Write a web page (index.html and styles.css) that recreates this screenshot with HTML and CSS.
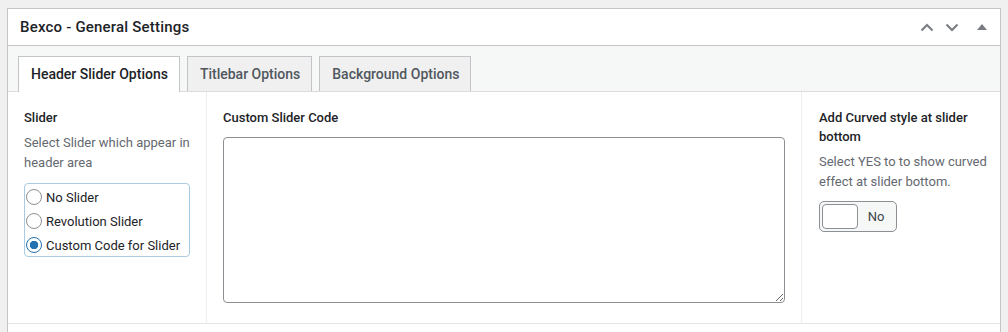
FILE: index.html
```html
<!DOCTYPE html>
<html lang="en">

<head>
    <meta charset="UTF-8" />
    <meta name="viewport" content="width=device-width, initial-scale=1" />
    <title>Bexco - General Settings</title>
    <link rel="stylesheet" href="styles.css">
</head>

<body>
    <div class="postbox">
        <div class="postbox-header">
            <h2>Bexco - General Settings</h2>
            <div class="handle-actions">
                <button class="handle-btn" aria-label="Move up">
                    <svg viewBox="0 0 14 9" width="14" height="9"><path d="M1.5 7.5 7 2l5.5 5.5" /></svg>
                </button>
                <button class="handle-btn" aria-label="Move down">
                    <svg viewBox="0 0 14 9" width="14" height="9"><path d="M1.5 1.5 7 7l5.5-5.5" /></svg>
                </button>
                <button class="handle-btn toggle-arrow" aria-label="Toggle panel">
                    <svg viewBox="0 0 10 6" width="10" height="6"><polygon points="5,0 10,6 0,6" /></svg>
                </button>
            </div>
        </div>

        <div class="tabs">
            <a href="#" class="tab active">Header Slider Options</a>
            <a href="#" class="tab">Titlebar Options</a>
            <a href="#" class="tab">Background Options</a>
        </div>

        <div class="fields">
            <div class="field field-slider">
                <div class="field-label">Slider</div>
                <p class="field-desc">Select Slider which appear in header area</p>
                <div class="radio-list">
                    <label class="radio"><input type="radio" name="slider" /> No Slider</label>
                    <label class="radio"><input type="radio" name="slider" /> Revolution Slider</label>
                    <label class="radio"><input type="radio" name="slider" checked /> Custom Code for Slider</label>
                </div>
            </div>
            <div class="field field-code">
                <div class="field-label">Custom Slider Code</div>
                <textarea class="code-box"></textarea>
            </div>
            <div class="field field-curve">
                <div class="field-label">Add Curved style at slider bottom</div>
                <p class="field-desc">Select YES to to show curved effect at slider bottom.</p>
                <div class="switch">
                    <span class="switch-knob"></span>
                    <span class="switch-text">No</span>
                </div>
            </div>
        </div>
        <div class="postbox-foot"></div>
    </div>
</body>
</html>
```

FILE: styles.css
```css
* {
    box-sizing: border-box;
}

body {
    margin: 0;
    padding: 8px 7px 0 7px;
    background: #f0f0f1;
    font-family: Roboto, "Open Sans", sans-serif;
    font-size: 13px;
    color: #1d2327;
}

.postbox {
    background: #fff;
    border: 1px solid #c3c4c7;
    border-bottom: none;
}

/* header */
.postbox-header {
    display: flex;
    align-items: center;
    justify-content: space-between;
    height: 37px;
    border-bottom: 1px solid #c3c4c7;
}

.postbox-header h2 {
    margin: 0;
    padding-left: 12px;
    font-size: 15px;
    font-weight: 500;
    letter-spacing: 0.2px;
}

.handle-actions {
    display: flex;
    align-items: center;
}

.handle-btn {
    display: flex;
    align-items: center;
    justify-content: center;
    width: 25px;
    height: 36px;
    padding: 0;
    border: none;
    background: none;
}

.handle-btn svg {
    fill: none;
    stroke: #787c82;
    stroke-width: 2;
}

.toggle-arrow {
    width: 36px;
}

.toggle-arrow svg {
    fill: #787c82;
    stroke: none;
}

/* tabs */
.tabs {
    display: flex;
    gap: 7px;
    padding: 10px 10px 0;
    background: #f6f7f7;
    border-bottom: 1px solid #dcdcde;
}

.tab {
    display: block;
    height: 35px;
    line-height: 34px;
    padding: 0 11px 0 12px;
    margin-bottom: -1px;
    border: 1px solid #c3c4c7;
    border-bottom: none;
    background: #f0f0f1;
    color: #50575e;
    font-size: 14px;
    font-weight: 500;
    text-decoration: none;
}

.tab.active {
    background: #fff;
    color: #1d2327;
    height: 36px;
}

/* fields */
.fields {
    display: flex;
    border-bottom: 1px solid #e5e5e5;
}

.field {
    padding: 16px 16px 20px;
}

.field-slider {
    width: 199px;
    border-right: 1px solid #eee;
}

.field-code {
    flex: 1;
    border-right: 1px solid #eee;
}

.field-curve {
    width: 198px;
    padding-left: 17px;
    padding-right: 12px;
}

.field-label {
    font-size: 13px;
    font-weight: 500;
    line-height: 19px;
}

.field-desc {
    margin: 6px 0 0;
    color: #646970;
    font-size: 13px;
    line-height: 20px;
}

.radio-list {
    margin-top: 10px;
    padding: 1px 0 0 1px;
    height: 74px;
    border: 1px solid #a9cbe4;
    border-radius: 4px;
}

.radio {
    display: flex;
    align-items: center;
    gap: 4px;
    height: 24px;
    font-size: 13px;
}

.radio input {
    appearance: none;
    width: 16px;
    height: 16px;
    margin: 0;
    border: 1px solid #8c8f94;
    border-radius: 50%;
    background: #fff;
}

.radio input:checked {
    border-color: #2271b1;
    background: radial-gradient(circle, #2271b1 0 4px, #fff 4.5px);
}

.code-box {
    display: block;
    width: 100%;
    height: 166px;
    margin-top: 10px;
    border: 1px solid #8c8f94;
    border-radius: 4px;
    resize: vertical;
}

.switch {
    display: flex;
    align-items: center;
    width: 78px;
    height: 31px;
    margin-top: 9px;
    padding: 2px;
    border: 1px solid #8c8f94;
    border-radius: 5px;
    background: #f6f7f7;
}

.switch-knob {
    width: 36px;
    height: 25px;
    border: 1px solid #8c8f94;
    border-radius: 4px;
    background: #fff;
}

.switch-text {
    flex: 1;
    text-align: center;
    font-size: 13px;
    color: #3c434a;
}

.postbox-foot {
    height: 10px;
}
```
